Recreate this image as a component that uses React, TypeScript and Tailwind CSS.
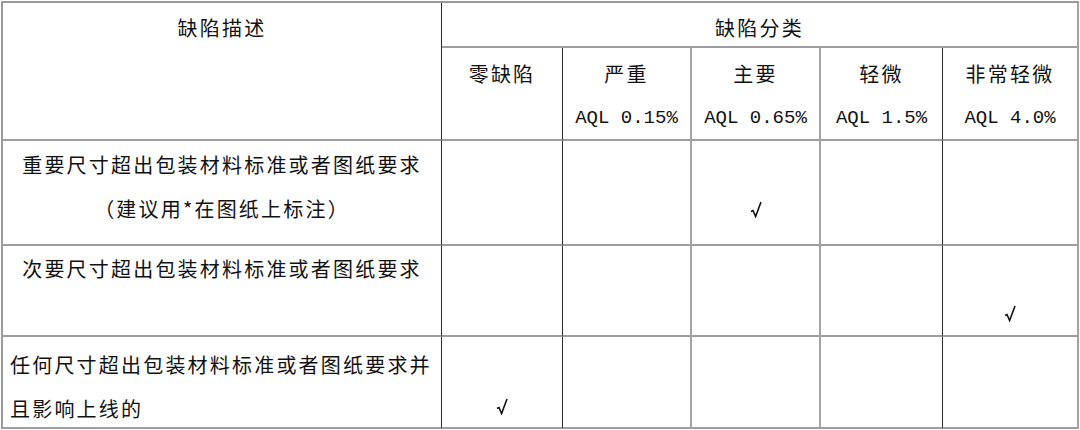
const cjk = "font-['Noto_Sans_CJK_SC',sans-serif] text-[20px] tracking-[2.2px] text-[#111]"
const mono = "font-['Liberation_Mono',monospace] text-[19px] text-[#111]"

// right-border styles per column
const dark = "border-r border-r-[#2b2b2b]"
const gray = "border-r-2 border-r-[#a3a3a3]"
const colRight = [dark, dark, gray, gray, dark, gray]
const rowBottom = "border-b-2 border-b-[#9e9e9e]"

const levels = [
  { name: "零缺陷", aql: "" },
  { name: "严重", aql: "AQL 0.15%" },
  { name: "主要", aql: "AQL 0.65%" },
  { name: "轻微", aql: "AQL 1.5%" },
  { name: "非常轻微", aql: "AQL 4.0%" },
]

interface Row {
  lines: string[]
  align: "center" | "left"
  pad: string
  mark: number
}

const rows: Row[] = [
  { lines: ["重要尺寸超出包装材料标准或者图纸要求", "（建议用*在图纸上标注）"], align: "center", pad: "pt-[2px]", mark: 2 },
  { lines: ["次要尺寸超出包装材料标准或者图纸要求"], align: "center", pad: "pt-[1px]", mark: 4 },
  { lines: ["任何尺寸超出包装材料标准或者图纸要求并", "且影响上线的"], align: "left", pad: "pt-[6px]", mark: 0 },
]

function Tick() {
  return (
    <svg width="12" height="17" viewBox="0 0 12 17" className="inline-block align-middle">
      <path d="M1 10.5 L3 9.5 L5.6 15.5 L11 1" fill="none" stroke="#111" strokeWidth="1.6" strokeLinejoin="miter" />
    </svg>
  )
}

export default function App() {
  return (
    <div className="w-[1080px] h-[430px] bg-white pt-[1px] pl-[1px]">
      <div className="grid grid-cols-[439px_121px_129px_129px_122px_136px] grid-rows-[45px_93px_105px_91px_92px] w-max border-l-2 border-t-2 border-l-[#9a9a9a] border-t-[#9a9a9a] leading-[44px]">
        {/* description header spans both header rows */}
        <div className={`row-span-2 ${dark} ${rowBottom} pt-[3px] text-center ${cjk}`}>缺陷描述</div>
        <div className={`col-span-5 ${gray} ${rowBottom} pt-[3px] text-center ${cjk}`}>缺陷分类</div>

        {levels.map((l, i) => (
          <div key={l.name} className={`${colRight[i + 1]} ${rowBottom} pt-[4px] text-center`}>
            <div className={`${cjk} whitespace-nowrap`}>{l.name}</div>
            <div className={mono}>{l.aql}</div>
          </div>
        ))}

        {rows.map((r, ri) => (
          <>
            <div
              key={`d${ri}`}
              className={`${colRight[0]} ${rowBottom} ${r.pad} ${r.align === "center" ? "text-center" : "text-left pl-[7px]"}`}
            >
              {r.lines.map((t) => (
                <div key={t} className={`${cjk} whitespace-nowrap`}>{t}</div>
              ))}
            </div>
            {levels.map((_, ci) => (
              <div key={`c${ri}-${ci}`} className={`${colRight[ci + 1]} ${rowBottom} ${r.pad} flex flex-col items-center`}>
                <div className="h-[44px]" />
                {r.mark === ci && (
                  <div className="h-[44px] flex items-center">
                    <Tick />
                  </div>
                )}
              </div>
            ))}
          </>
        ))}
      </div>
    </div>
  )
}
